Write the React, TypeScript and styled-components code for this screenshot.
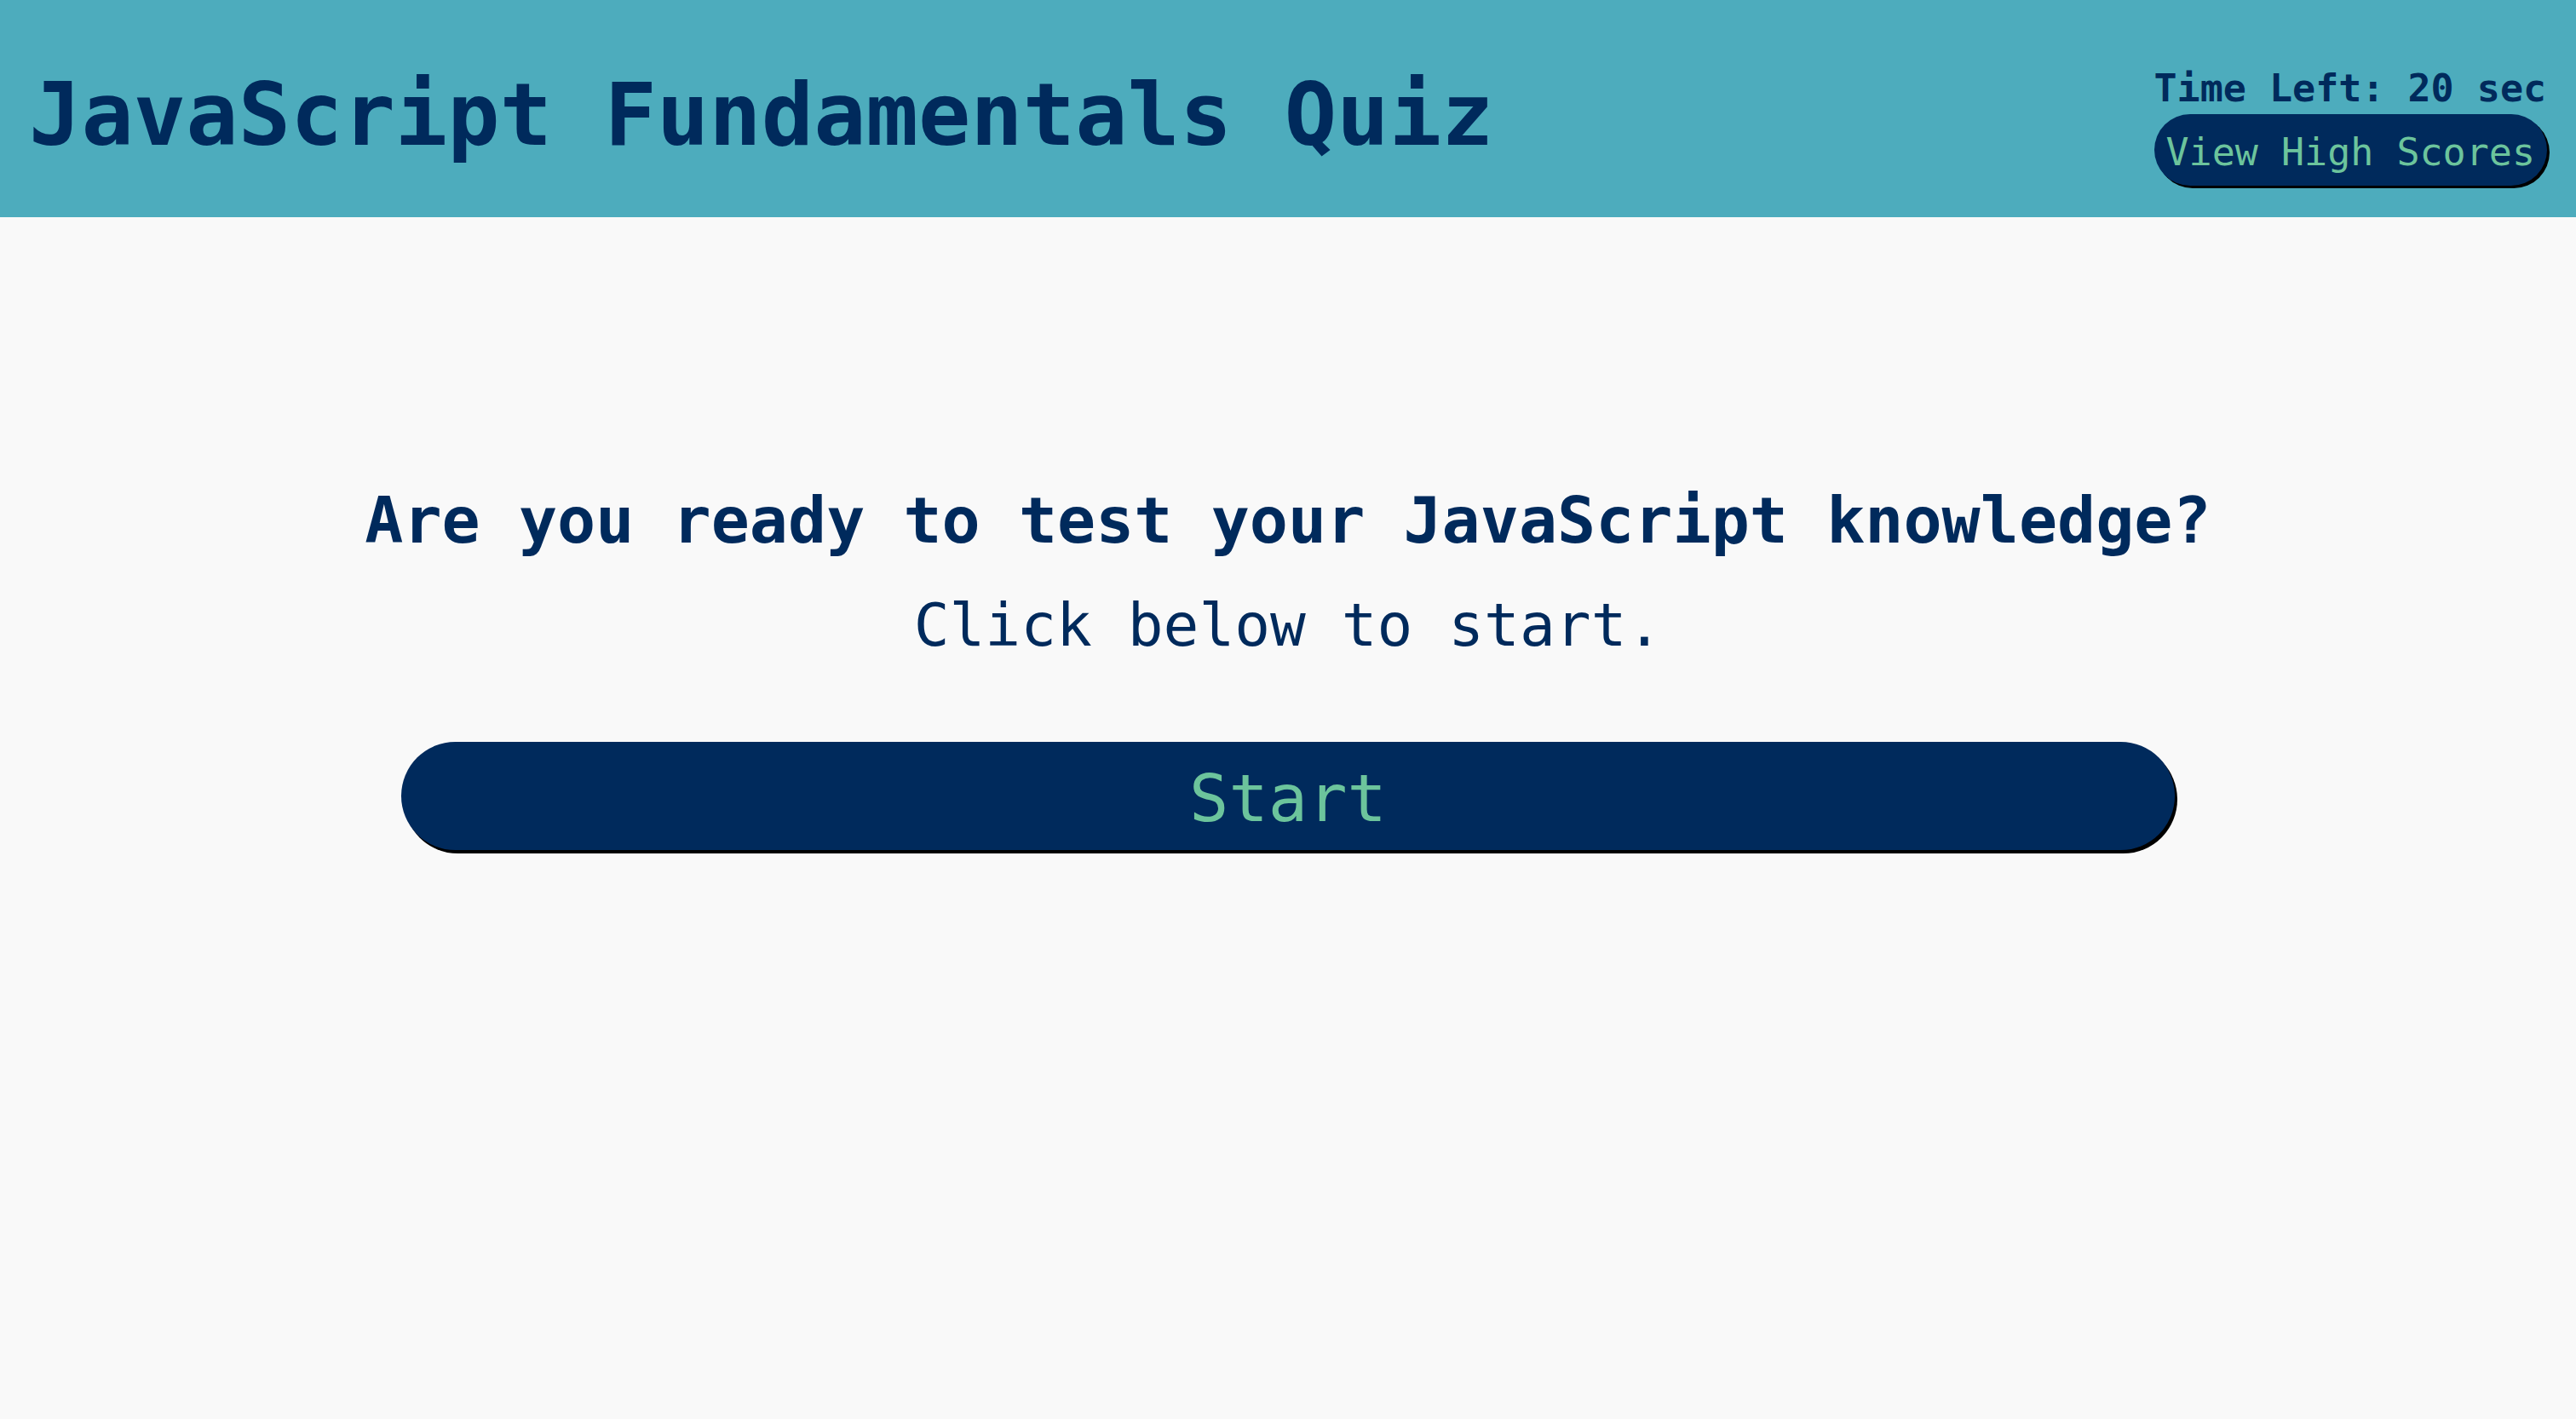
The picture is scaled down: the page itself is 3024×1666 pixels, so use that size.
import React from "react";
import styled, { createGlobalStyle } from "styled-components";

const GlobalStyle = createGlobalStyle`
  html, body {
    margin: 0;
    padding: 0;
    background: #f9f9f9;
  }
  body {
    font-family: "DejaVu Sans Mono", "Liberation Mono", monospace;
    color: #002a5c;
  }
  * { box-sizing: border-box; }
`;

const Page = styled.div`
  min-height: 100vh;
  background: #f9f9f9;
`;

const Header = styled.header`
  height: 255px;
  background: #4dacbd;
  display: flex;
  justify-content: space-between;
  align-items: flex-start;
  padding: 75px 34px 0 34px;
`;

const Title = styled.h1`
  margin: 0;
  font-size: 102px;
  font-weight: 700;
  line-height: normal;
  color: #002a5c;
`;

const Side = styled.div`
  display: flex;
  flex-direction: column;
  align-items: flex-start;
  gap: 4px;
  padding-top: 2px;
`;

const Timer = styled.div`
  font-size: 45px;
  font-weight: 700;
  line-height: normal;
  color: #002a5c;
`;

const PillButton = styled.button<{ $big?: boolean }>`
  font-family: "DejaVu Sans Mono", "Liberation Mono", monospace;
  background: #002a5c;
  color: #6cc49c;
  border: none;
  border-radius: 999px;
  cursor: pointer;
  line-height: normal;
  font-size: ${(p) => (p.$big ? "77px" : "45px")};
  padding: ${(p) => (p.$big ? "22px 0 16px" : "18px 14px 13px")};
  width: ${(p) => (p.$big ? "2082px" : "auto")};
  box-shadow: ${(p) => (p.$big ? "3px 4px 0 #000" : "3px 3px 0 #000")};
`;

const Main = styled.main`
  display: flex;
  flex-direction: column;
  align-items: center;
  padding-top: 312px;
`;

const Question = styled.h2`
  margin: 0;
  font-size: 75px;
  font-weight: 700;
  line-height: normal;
  color: #002a5c;
`;

const Sub = styled.p`
  margin: 38px 0 0;
  font-size: 69.5px;
  font-weight: 400;
  line-height: normal;
  color: #002a5c;
`;

const StartWrap = styled.div`
  margin-top: 97px;
  display: flex;
  justify-content: center;
`;

export default function App() {
  return (
    <Page>
      <GlobalStyle />
      <Header>
        <Title>JavaScript Fundamentals Quiz</Title>
        <Side>
          <Timer>Time Left: 20 sec</Timer>
          <PillButton>View High Scores</PillButton>
        </Side>
      </Header>
      <Main>
        <Question>Are you ready to test your JavaScript knowledge?</Question>
        <Sub>Click below to start.</Sub>
        <StartWrap>
          <PillButton $big>Start</PillButton>
        </StartWrap>
      </Main>
    </Page>
  );
}
